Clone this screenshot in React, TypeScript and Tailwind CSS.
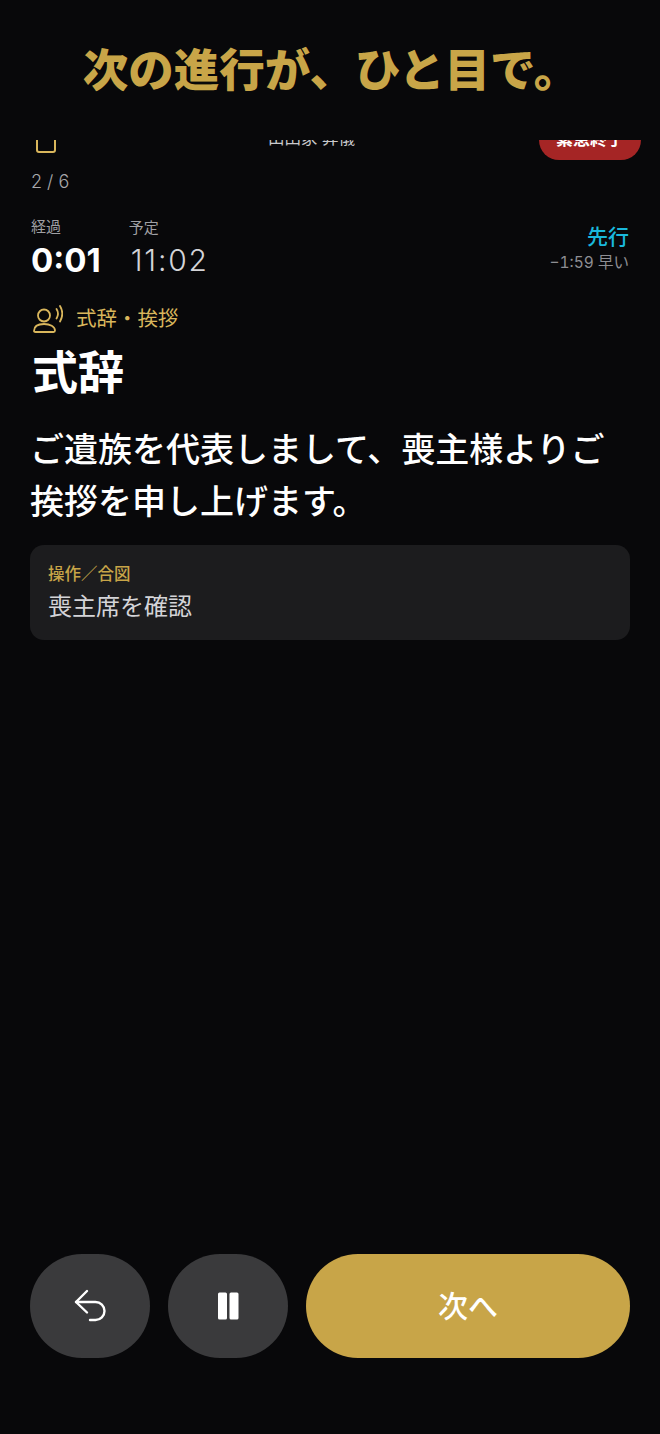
const gold = '#c8a548'

function PersonVoiceIcon() {
  return (
    <svg width="30" height="28" viewBox="0 0 30 28" fill="none" stroke="#d9b65c" strokeWidth="1.8" strokeLinecap="round" strokeLinejoin="round">
      <circle cx="11" cy="10.5" r="6" />
      <path d="M1 26c0-4.5 4-7 10-7s11 2.500 11 6.500c0 .6-.4 1.500-1.500 1.500H2.500C1.500 27 1 26.500 1 26z" />
      <path d="M23.500 4c1.800 2.800 1.800 6.500 0 9.500" />
      <path d="M27 1c2.800 4.500 2.800 10.500 0 15.500" />
    </svg>
  )
}

function UndoIcon() {
  return (
    <svg width="34" height="34" viewBox="0 0 34 34" fill="none" stroke="white" strokeWidth="2.400" strokeLinecap="round" strokeLinejoin="round">
      <path d="M14 2 3 13l11 10.500" />
      <path d="M3 13h19.500a9 9 0 0 1 0 18H17" />
    </svg>
  )
}

function PauseIcon() {
  return (
    <svg width="22" height="28" viewBox="0 0 22 28" fill="white">
      <rect x="1" y="0.500" width="9" height="27" rx="1.500" />
      <rect x="12.500" y="0.500" width="9" height="27" rx="1.500" />
    </svg>
  )
}

export default function App() {
  return (
    <div className="flex h-[1434px] w-[660px] flex-col overflow-hidden bg-[#08080a] font-['Inter','Noto_Sans_CJK_JP',sans-serif] text-white">
      <header className="flex h-[140px] shrink-0 items-start justify-center pt-[40px] pl-[2px]">
        <h1 className="text-[45.500px] leading-[62px] font-black text-[#c8a548]">次の進行が、ひと目で。</h1>
      </header>

      <main className="flex-1 overflow-hidden px-[30px]">
        {/* top bar is scrolled mostly out of view */}
        <div className="-mt-[20px] flex h-[40px] items-start justify-between">
          <div className="mt-[15px] ml-[6px] h-[18px] w-[20px] rounded-[3px] border-2 border-[#d9b65c]" />
          <div className="mt-[7px] ml-[28px] text-[16.500px] leading-[22px] text-[#c9c9cc]">山田家 葬儀</div>
          <div className="-mr-[11px] flex h-[40px] w-[102px] items-center justify-center rounded-[20px] bg-[#a52525] text-[17px] font-bold">
            緊急終了
          </div>
        </div>

        <div className="mt-[10px] pl-[1px] text-[18px] leading-[24px] font-light text-[#a8a8ac]">2 / 6</div>

        <div className="mt-[23px] flex items-start justify-between">
          <div className="flex gap-[28px]">
            <div className="pl-[1px]">
              <div className="text-[15px] leading-[20px] text-[#a0a0a4]">経過</div>
              <div className="mt-[3px] text-[33px] leading-[40px] font-bold">0:01</div>
            </div>
            <div className="pt-[1px]">
              <div className="text-[15px] leading-[20px] text-[#a0a0a4]">予定</div>
              <div className="mt-[2px] pl-[2px] text-[30px] leading-[40px] font-light tracking-[1.800px] text-[#d4d4d8]">11:02</div>
            </div>
          </div>
          <div className="flex flex-col items-end pt-[5px] pr-[1px]">
            <div className="text-[21px] leading-[30px] font-medium text-[#1ab8dc]">先行</div>
            <div className="mt-[1px] text-[15.500px] leading-[20px] text-[#8e8e93] tabular-nums">−1:59 早い</div>
          </div>
        </div>

        <div className="mt-[25px] flex items-center gap-[13px] pl-[3px]">
          <PersonVoiceIcon />
          <span className="text-[20.500px] leading-[28px] text-[#d9b65c]">式辞・挨拶</span>
        </div>

        <h2 className="mt-[8px] pl-[2px] text-[46px] leading-[62px] font-bold">式辞</h2>

        <p className="mt-[21px] pr-[20px] text-[34px] leading-[52px] font-medium">ご遺族を代表しまして、喪主様よりご挨拶を申し上げます。</p>

        <div className="mt-[17px] rounded-[14px] bg-[#1c1c1e] px-[18px] pt-[17px] pb-[15px]">
          <div className="text-[16.500px] leading-[24px] font-medium" style={{ color: gold }}>操作／合図</div>
          <div className="mt-[3px] text-[24px] leading-[36px] text-[#d4d4d8]">喪主席を確認</div>
        </div>
      </main>

      <footer className="flex shrink-0 gap-[18px] px-[30px] pb-[76px]">
        <button className="flex h-[104px] w-[120px] items-center justify-center rounded-[52px] bg-[#3a3a3c]">
          <UndoIcon />
        </button>
        <button className="flex h-[104px] w-[120px] items-center justify-center rounded-[52px] bg-[#3a3a3c]">
          <PauseIcon />
        </button>
        <button className="flex h-[104px] flex-1 items-center justify-center rounded-[52px] bg-[#c8a548] text-[30px] font-medium">
          次へ
        </button>
      </footer>
    </div>
  )
}
